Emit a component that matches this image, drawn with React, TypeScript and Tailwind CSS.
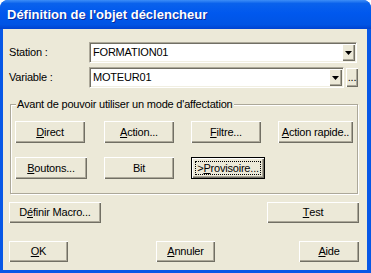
import type { ReactNode } from "react";
import clsx from "clsx";

const raised =
  "bg-[#ece9d8] shadow-[inset_1px_1px_0_#fff,inset_-1px_-1px_0_#716f64,inset_-2px_-2px_0_#aca899]";

function Btn({
  children,
  w,
  h = "h-[22px]",
  focused,
}: {
  children: ReactNode;
  w: string;
  h?: string;
  focused?: boolean;
}) {
  if (focused) {
    return (
      <button
        className={clsx(
          w,
          h,
          "p-[3px] flex border border-black bg-[#ece9d8] shadow-[inset_1px_1px_0_#fff,inset_-1px_-1px_0_#716f64,inset_-2px_-2px_0_#aca899]"
        )}
      >
        <span className="flex-1 flex items-center justify-center border border-dotted border-black text-[11px] leading-none whitespace-nowrap">
          {children}
        </span>
      </button>
    );
  }
  return (
    <button
      className={clsx(
        w,
        h,
        raised,
        "flex items-center justify-center text-[11px] leading-none whitespace-nowrap"
      )}
    >
      {children}
    </button>
  );
}

function Arrow() {
  return (
    <div className={clsx(raised, "w-[13px] h-full flex items-center justify-center")}>
      <svg width="7" height="4" viewBox="0 0 7 4">
        <polygon points="0,0 7,0 3.5,4" fill="#000" />
      </svg>
    </div>
  );
}

function Combo({ value, w }: { value: string; w: string }) {
  return (
    <div
      className={clsx(
        w,
        "h-[21px] p-[1px] flex items-stretch bg-white border border-t-[#aca899] border-l-[#aca899] border-r-white border-b-white shadow-[inset_1px_1px_0_#716f64,inset_-1px_-1px_0_#f1efe2]"
      )}
    >
      <span className="flex-1 pl-[2px] flex items-center text-[11px]">{value}</span>
      <Arrow />
    </div>
  );
}

export default function App() {
  return (
    <div className="w-[371px] h-[273px] rounded-t-[8px] overflow-hidden bg-[#0757e6] flex flex-col font-['Liberation_Sans',Arial,sans-serif] text-black">
      <div className="h-[29px] shrink-0 pl-[7px] flex items-center bg-[linear-gradient(to_bottom,#3d8ef7_0%,#0a62ec_12%,#0058ee_45%,#0054e4_85%,#0042d0_100%)]">
        <span className="text-white font-bold text-[13px] [text-shadow:1px_1px_0_#0b2a9a]">
          Définition de l'objet déclencheur
        </span>
      </div>

      <div className="flex-1 ml-[3px] mr-[4px] mb-[3px] bg-[#ece9d8] pl-[6px] pr-[8px] pt-[13px] flex flex-col tracking-[-0.2px]">
        <div className="flex items-center h-[21px]">
          <span className="w-[80px] text-[11px]">Station :</span>
          <Combo value="FORMATION01" w="w-[268px]" />
        </div>
        <div className="flex items-center h-[21px] mt-[4px]">
          <span className="w-[80px] text-[11px]">Variable :</span>
          <Combo value="MOTEUR01" w="w-[255px]" />
          <button className={clsx(raised, "ml-[2px] w-[12px] h-[19px] flex items-end justify-center pb-[4px] text-[11px] leading-none")}>
            ...
          </button>
        </div>

        <fieldset className="mt-[10px] ml-[1px] w-[348px] border border-[#aca899] shadow-[inset_1px_1px_0_#fff,1px_1px_0_#fff]">
          <legend className="ml-[5px] px-[1px] text-[11px] leading-[13px] bg-[#ece9d8]">
            Avant de pouvoir utiliser un mode d'affectation
          </legend>
          <div className="pt-[10px] pl-[4px] pb-[14px] flex flex-col">
            <div className="flex">
              <Btn w="w-[70px]"><u>D</u>irect</Btn>
              <div className="ml-[19px]">
                <Btn w="w-[70px]"><u>A</u>ction...</Btn>
              </div>
              <div className="ml-[17px]">
                <Btn w="w-[70px]"><u>F</u>iltre...</Btn>
              </div>
              <div className="ml-[17px]">
                <Btn w="w-[75px]"><u>A</u>ction rapide..</Btn>
              </div>
            </div>
            <div className="flex mt-[14px]">
              <Btn w="w-[72px]"><u>B</u>outons...</Btn>
              <div className="ml-[17px]">
                <Btn w="w-[70px]">Bit</Btn>
              </div>
              <div className="ml-[17px]">
                <Btn w="w-[74px]" focused>
                  &gt;<u>P</u>rovisoire...
                </Btn>
              </div>
            </div>
          </div>
        </fieldset>

        <div className="flex justify-between mt-[8px]">
          <Btn w="w-[92px]" h="h-[21px]">D<u>é</u>finir Macro...</Btn>
          <Btn w="w-[92px]" h="h-[21px]"><u>T</u>est</Btn>
        </div>

        <div className="flex mt-[18px]">
          <Btn w="w-[59px]" h="h-[21px]"><u>O</u>K</Btn>
          <div className="ml-[88px]">
            <Btn w="w-[59px]" h="h-[21px]"><u>A</u>nnuler</Btn>
          </div>
          <div className="ml-auto">
            <Btn w="w-[60px]" h="h-[21px]"><u>A</u>ide</Btn>
          </div>
        </div>
      </div>
    </div>
  );
}
